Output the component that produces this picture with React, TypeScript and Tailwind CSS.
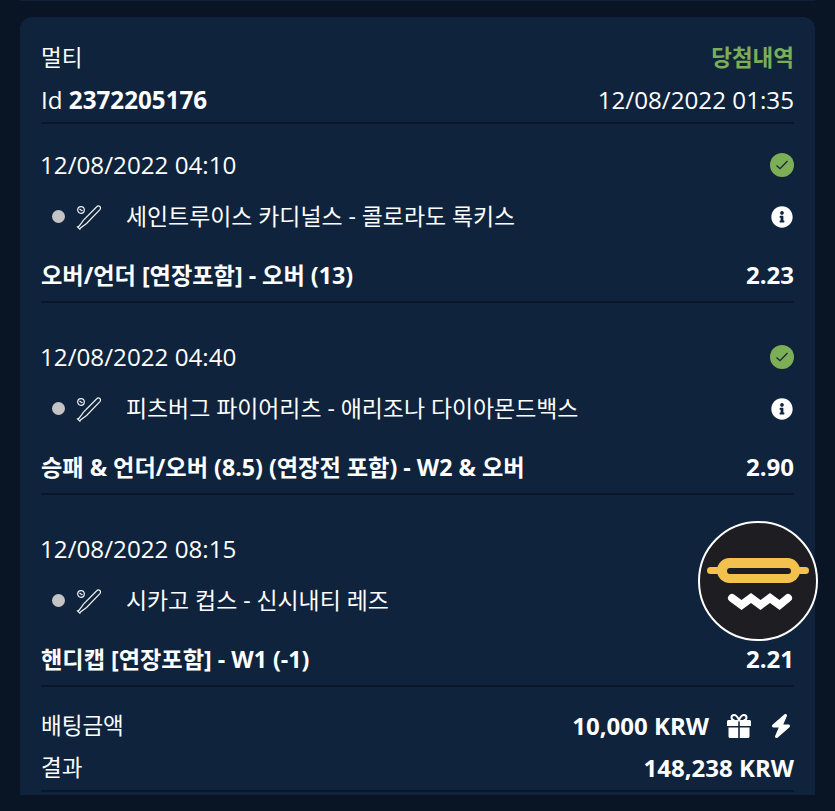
import { FaInfoCircle } from 'react-icons/fa';
import { FaBolt } from 'react-icons/fa6';

const font = { fontFamily: '"Open Sans", "Noto Sans CJK KR", sans-serif' };

const bets = [
  {
    date: '12/08/2022 04:10',
    teams: '세인트루이스 카디널스 - 콜로라도 록키스',
    market: '오버/언더 [연장포함] - 오버 (13)',
    odds: '2.23',
    won: true,
  },
  {
    date: '12/08/2022 04:40',
    teams: '피츠버그 파이어리츠 - 애리조나 다이아몬드백스',
    market: '승패 & 언더/오버 (8.5) (연장전 포함) - W2 & 오버',
    odds: '2.90',
    won: true,
  },
  {
    date: '12/08/2022 08:15',
    teams: '시카고 컵스 - 신시내티 레즈',
    market: '핸디캡 [연장포함] - W1 (-1)',
    odds: '2.21',
    won: false,
  },
];

const BatIcon = () => (
  <svg width="26" height="26" viewBox="0 0 26 26" fill="none" stroke="#f1f1f1" strokeWidth="1.2">
    <circle cx="5" cy="6" r="3.300" />
    <path d="M3.500 5l3 2" />
    <path d="M20.500 3c1-1.100 2.400-1.200 3.300-.5s1 2 .1 3.100L10.600 19.500 8.200 21.300l-3.700 2.700-.6 1.200-2.400-2.200 1.300-.6 2.800-3.600 1.700-2.400z" />
  </svg>
);

const GiftIcon = () => (
  <svg width="24" height="24" viewBox="0 0 24 24" className="ml-[18px]">
    <path
      d="M7.500 6.200C5.500 6.200 4.500 5 4.500 3.500S5.600 1 7 1c2 0 3.800 2.200 5 5 1.200-2.800 3-5 5-5 1.400 0 2.500 1 2.500 2.500s-1 2.700-3 2.700"
      fill="none"
      stroke="#ffffff"
      strokeWidth="2"
    />
    <path
      d="M1.500 6h9.700v6H0V7.500C0 6.700.7 6 1.500 6zM12.800 6h9.700c.8 0 1.500.7 1.500 1.500V12H12.800zM1.500 13.500h9.700V24H3c-.8 0-1.500-.7-1.500-1.500zM12.800 13.500h9.700v9c0 .8-.7 1.500-1.500 1.500h-8.200z"
      fill="#ffffff"
    />
  </svg>
);

const CheckBadge = () => (
  <div className="flex h-6 w-6 items-center justify-center rounded-full bg-[#7cae57]">
    <svg width="14" height="14" viewBox="0 0 14 14" fill="none" stroke="#10233d" strokeWidth="1.2">
      <path d="M1.500 7.500l3.500 3.200L12.500 3" />
    </svg>
  </div>
);

const Logo = () => (
  <svg width="102" height="54" viewBox="0 0 102 54" fill="none" className="mt-2">
    <rect x="0" y="9" width="102" height="7" rx="3.500" fill="#f2c14e" />
    <rect x="10" y="0" width="83" height="25" rx="12.500" fill="#f2c14e" />
    <rect x="20" y="10" width="64" height="6" rx="3" fill="#1d1d22" />
    <path
      d="M25 40l9.500 7L44 40l9.500 7L63 40l9.500 7L81 40"
      stroke="#ffffff"
      strokeWidth="8"
      strokeLinecap="round"
      strokeLinejoin="miter"
    />
  </svg>
);

export default function App() {
  return (
    <div style={font} className="relative h-[811px] w-[835px] overflow-hidden bg-[#091524] text-white">
      <div className="mx-5 h-px bg-[#0f2037]" />
      <div className="mx-5 mt-4 h-[778px] rounded-t-xl bg-[#10233d] px-[21px]">
        {/* header */}
        <div className="flex h-[107px] flex-col border-b-2 border-[#0b1729] pt-[21px]">
          <div className="flex h-[41px] items-center justify-between text-[22.500px]">
            <span>멀티</span>
            <span className="font-semibold text-[#7cae57]">당첨내역</span>
          </div>
          <div className="flex h-[45px] items-center justify-between text-[24.200px]">
            <span>
              Id <span className="font-bold">2372205176</span>
            </span>
            <span>12/08/2022 01:35</span>
          </div>
        </div>

        {bets.map((bet, i) => (
          <div
            key={bet.date}
            className={
              i === 0
                ? 'flex h-[179px] flex-col border-b-2 border-[#0b1729] pt-[21px]'
                : 'flex h-[192px] flex-col border-b-2 border-[#0b1729] pt-[34px]'
            }
          >
            <div className="flex h-10 items-center justify-between">
              <span className="-ml-px text-[24.200px]">{bet.date}</span>
              {bet.won && <CheckBadge />}
            </div>
            <div className="mt-3 flex h-10 items-center justify-between pr-px">
              <div className="flex items-center">
                <span className="ml-[11px] h-[13px] w-[13px] rounded-full bg-[#c4c4c4]" />
                <span className="ml-[11px] flex">
                  <BatIcon />
                </span>
                <span className="ml-6 text-[22.900px]">{bet.teams}</span>
              </div>
              {bet.won && <FaInfoCircle size={22} color="#ffffff" />}
            </div>
            <div className="mt-[18px] flex h-10 items-center justify-between font-bold">
              <span className="text-[23.200px]">{bet.market}</span>
              <span className="text-[24px]">{bet.odds}</span>
            </div>
          </div>
        ))}

        {/* totals */}
        <div className="flex flex-col border-b-2 border-[#0b1729] pt-[19px]">
          <div className="flex h-10 items-center justify-between">
            <span className="text-[22.500px]">배팅금액</span>
            <div className="flex items-center text-[24px] font-bold">
              <span>10,000 KRW</span>
              <GiftIcon />
              <FaBolt className="ml-[18px] mr-px" size={24} color="#ffffff" />
            </div>
          </div>
          <div className="flex h-[44px] items-center justify-between">
            <span className="text-[22.500px]">결과</span>
            <span className="text-[24px] font-bold">148,238 KRW</span>
          </div>
        </div>
      </div>

      {/* chat launcher */}
      <div className="absolute left-[698px] top-[521px] flex h-[120px] w-[120px] items-center justify-center rounded-full border-2 border-white bg-[#1d1d22]">
        <Logo />
      </div>
    </div>
  );
}
